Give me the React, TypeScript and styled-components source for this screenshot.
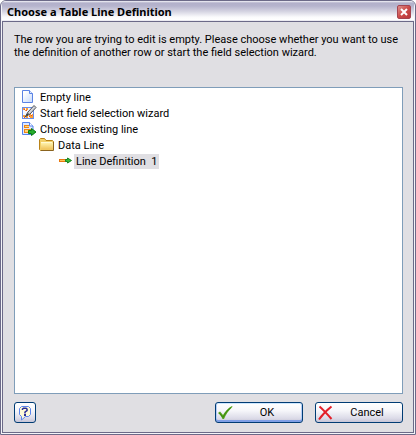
import React from "react";
import styled, { createGlobalStyle } from "styled-components";

const GlobalStyle = createGlobalStyle`
  * { box-sizing: border-box; }
  body { margin: 0; background: #ffffff; }
  body, button {
    font-family: Roboto, Tahoma, "Liberation Sans", sans-serif;
    font-size: 11px;
    line-height: 13px;
    color: #000000;
  }
`;

const Frame = styled.section`
  display: flex;
  flex-direction: column;
  min-height: 100vh;
  padding: 0 1px 1px;
  background: #f4f4f8;
  border: 1px solid #6c6a88;
  border-radius: 6px 6px 0 0;
  overflow: hidden;
`;

const TitleBar = styled.header`
  display: flex;
  align-items: center;
  justify-content: space-between;
  height: 20px;
  padding: 2px 3px 0 5px;
  background: linear-gradient(#f4f4f9 0, #b2b0ca 2px, #b6b4cd 5px, #d2d1e0 10px, #fafafc 16px, #ffffff 19px, #d8d7e4 20px);
`;

const Title = styled.h1`
  margin: 0;
  font-family: "Noto Sans", Tahoma, sans-serif;
  font-size: 11px;
  line-height: 16px;
  font-weight: bold;
  white-space: nowrap;
`;

const CloseButton = styled.button`
  display: flex;
  align-items: center;
  justify-content: center;
  width: 14px;
  height: 14px;
  padding: 0;
  border: 1px solid #a5434f;
  border-radius: 2px;
  background: linear-gradient(135deg, #dc8f8c, #cc4a48 50%, #b93a3c);
`;

const Content = styled.div`
  display: flex;
  flex: 1;
  flex-direction: column;
  padding: 11px 10px 9px 11px;
  background: #e0dfe3;
  border: 1px solid #6c6a88;
`;

const Message = styled.p`
  margin: 0 0 28px;
  min-height: 26px;
`;

const TreePanel = styled.div`
  flex: 1;
  padding: 1px 6px;
  background: #ffffff;
  border: 1px solid #7f9db9;
`;

const TreeList = styled.ul`
  margin: 0;
  padding: 0;
  list-style: none;

  & & { padding-left: 18px; }
`;

const Row = styled.div`
  display: flex;
  align-items: center;
  gap: 1px;
  height: 16px;
`;

const Label = styled.span<{ $selected?: boolean }>`
  padding: 1px 2px;
  white-space: pre;
  background: ${(p) => (p.$selected ? "#e0dfe3" : "transparent")};
`;

const Footer = styled.footer`
  display: flex;
  gap: 12px;
  padding-top: 8px;
`;

const PushButton = styled.button`
  display: flex;
  align-items: center;
  width: 88px;
  height: 21px;
  padding: 0 2px;
  border: 1px solid #003c74;
  border-radius: 3px;
  background: linear-gradient(#ffffff, #f6f6fa 40%, #dcdbe8 80%, #c6c5d7);

  & > span { flex: 1; text-align: center; }
`;

const DefaultButton = styled(PushButton)`
  box-shadow: inset 0 1px #cee7ff, inset 0 -2px #7f9fe6, inset 1px 0 #b4cdf6, inset -1px 0 #b4cdf6;
`;

const HelpButton = styled(PushButton)`
  justify-content: center;
  width: 22px;
  margin-right: auto;
`;

const Icon = styled.svg`
  display: block;
  flex: none;
`;

const PageIcon = () => (
  <Icon width="16" height="16" viewBox="0 0 16 16" aria-hidden="true">
    <defs>
      <linearGradient id="page" x1="0" y1="0" x2="1" y2="1">
        <stop offset="0.2" stopColor="#ffffff" />
        <stop offset="1" stopColor="#c4d8fb" />
      </linearGradient>
    </defs>
    <path d="M1.5 1.500h7l3 3v9h-10z" fill="url(#page)" stroke="#5b83e4" />
    <path d="M8.5 1.500v3h3" fill="#e6effe" stroke="#5b83e4" />
  </Icon>
);

const WizardIcon = () => (
  <Icon width="16" height="16" viewBox="0 0 16 16" aria-hidden="true">
    <rect x="1.5" y="2.5" width="11" height="11" fill="#f4f6ff" stroke="#6a8ee8" />
    <path d="M2 3h2v2H2zM5 3h2v2H5zM4 5h1v1H4zM2 10h2v2H2zM5 11h2v2H5zM8 9h2v2H8zM11 9h1v2h-1zM9 11h3v2H9z" fill="#ffa033" />
    <path d="M3 4h1v1H3zM5 5h1v1H5zM3 12h1v1H3zM4 11h1v1H4zM8 11h1v1H8zM10 10h1v1h-1z" fill="#e94b24" />
    <path d="M4 12l3-5 6-6.5 2 2L9 9z" fill="#d3d5da" stroke="#4d5058" />
    <path d="M4 12l3-4 1 1z" fill="#30343a" />
  </Icon>
);

const ExistingIcon = () => (
  <Icon width="16" height="16" viewBox="0 0 16 16" aria-hidden="true">
    <path d="M1.5 1.5h7l3.500 3.500v8.500H1.500z" fill="#dce8ff" stroke="#5682ec" />
    <path d="M8.5 1.5V5H12" fill="#ffffff" stroke="#5682ec" />
    <path d="M3 4h5v3H3zM3 8h7v4H3z" fill="#ee8615" />
    <path d="M4 5h4v1H4zM4 9h5v2H4z" fill="#ffd476" />
    <path d="M7.5 9.5h3v-2l4.500 3.500-4.500 3.500v-2h-3z" fill="#25ad2c" stroke="#087a10" />
  </Icon>
);

const FolderIcon = () => (
  <Icon width="16" height="16" viewBox="0 0 16 16" aria-hidden="true">
    <defs>
      <linearGradient id="folder" x1="0" y1="0" x2="0" y2="1">
        <stop offset="0" stopColor="#fff5af" />
        <stop offset="1" stopColor="#efc15a" />
      </linearGradient>
    </defs>
    <path d="M.5 12.5v-10l1-1h4l1.500 2h6.500l1 1v8l-1 1h-12z" fill="#f2cf67" stroke="#b98319" />
    <path d="M2 5.5h12v7H2z" fill="url(#folder)" />
    <path d="M14.5 5v8.500H2" fill="none" stroke="#8a6420" />
    <path d="M2 5.5h11" stroke="#fffad2" />
  </Icon>
);

const LineIcon = () => (
  <Icon width="16" height="16" viewBox="0 0 16 16" aria-hidden="true">
    <rect x="2.5" y="6.5" width="7" height="2" fill="#ffc35a" stroke="#e9780e" />
    <path d="M8.5 6.5h2v-1.500l4 2.500-4 2.500V8.500h-2z" fill="#35bd35" stroke="#168421" />
  </Icon>
);

const CheckIcon = () => (
  <Icon width="16" height="16" viewBox="0 0 16 16" aria-hidden="true">
    <path d="M0 8l2-1.500 3 3.500C7 6.500 10 3 14 1l.5.8C11 5 8 9.500 6 14H4.500C3.500 11.500 2 9.500 0 8z" fill="#55a51c" />
    <path d="M1.5 8l3.500 4.500C7 8 10 4.500 13 2.500" fill="none" stroke="#3f8a12" />
  </Icon>
);

const CrossIcon = () => (
  <Icon width="16" height="16" viewBox="0 0 16 16" aria-hidden="true">
    <path d="M1.5 1.5C5 4.500 10 10 13.500 14M13.500 1.500C9 5 4 10 1 14.500" fill="none" stroke="#e3202a" strokeWidth="2" />
  </Icon>
);

const CloseIcon = () => (
  <Icon width="8" height="8" viewBox="0 0 8 8" aria-hidden="true">
    <path d="M1 1l6 6M7 1L1 7" stroke="#ffffff" strokeWidth="2" />
  </Icon>
);

const HelpIcon = () => (
  <Icon width="16" height="16" viewBox="0 0 16 16" aria-hidden="true">
    <path d="M4.5 1.5h7l2 2v6l-2 2H8.500l-4 3.500v-3.500l-2-2v-6z" fill="#fffbd8" stroke="#5c86ec" />
    <path d="M5.5 5V4l1-.8h2.500l1 .8v1.500L8 7v1.500" fill="none" stroke="#292d96" strokeWidth="1.5" />
    <path d="M7 9h2v2H7z" fill="#292d96" />
  </Icon>
);

interface TreeNode {
  label: string;
  icon: React.ComponentType;
  selected?: boolean;
  children?: TreeNode[];
}

const nodes: TreeNode[] = [
  { label: "Empty line", icon: PageIcon },
  { label: "Start field selection wizard", icon: WizardIcon },
  {
    label: "Choose existing line",
    icon: ExistingIcon,
    children: [
      {
        label: "Data Line",
        icon: FolderIcon,
        children: [{ label: "Line Definition  1", icon: LineIcon, selected: true }],
      },
    ],
  },
];

const TreeItems = ({ items, role }: { items: TreeNode[]; role: "tree" | "group" }) => (
  <TreeList role={role}>
    {items.map(({ label, icon: NodeIcon, selected, children }) => (
      <li key={label} role="treeitem" aria-selected={!!selected} aria-expanded={children ? true : undefined}>
        <Row>
          <NodeIcon />
          <Label $selected={selected}>{label}</Label>
        </Row>
        {children && <TreeItems items={children} role="group" />}
      </li>
    ))}
  </TreeList>
);

export default function App() {
  return (
    <>
      <GlobalStyle />
      <Frame role="dialog" aria-labelledby="dialog-title" aria-describedby="dialog-message">
        <TitleBar>
          <Title id="dialog-title">Choose a Table Line Definition</Title>
          <CloseButton type="button" aria-label="Close">
            <CloseIcon />
          </CloseButton>
        </TitleBar>
        <Content>
          <Message id="dialog-message">
            The row you are trying to edit is empty. Please choose whether you want to use the definition of another
            row or start the field selection wizard.
          </Message>
          <TreePanel>
            <TreeItems items={nodes} role="tree" />
          </TreePanel>
          <Footer>
            <HelpButton type="button" aria-label="Help">
              <HelpIcon />
            </HelpButton>
            <DefaultButton type="button">
              <CheckIcon />
              <span>OK</span>
            </DefaultButton>
            <PushButton type="button">
              <CrossIcon />
              <span>Cancel</span>
            </PushButton>
          </Footer>
        </Content>
      </Frame>
    </>
  );
}
